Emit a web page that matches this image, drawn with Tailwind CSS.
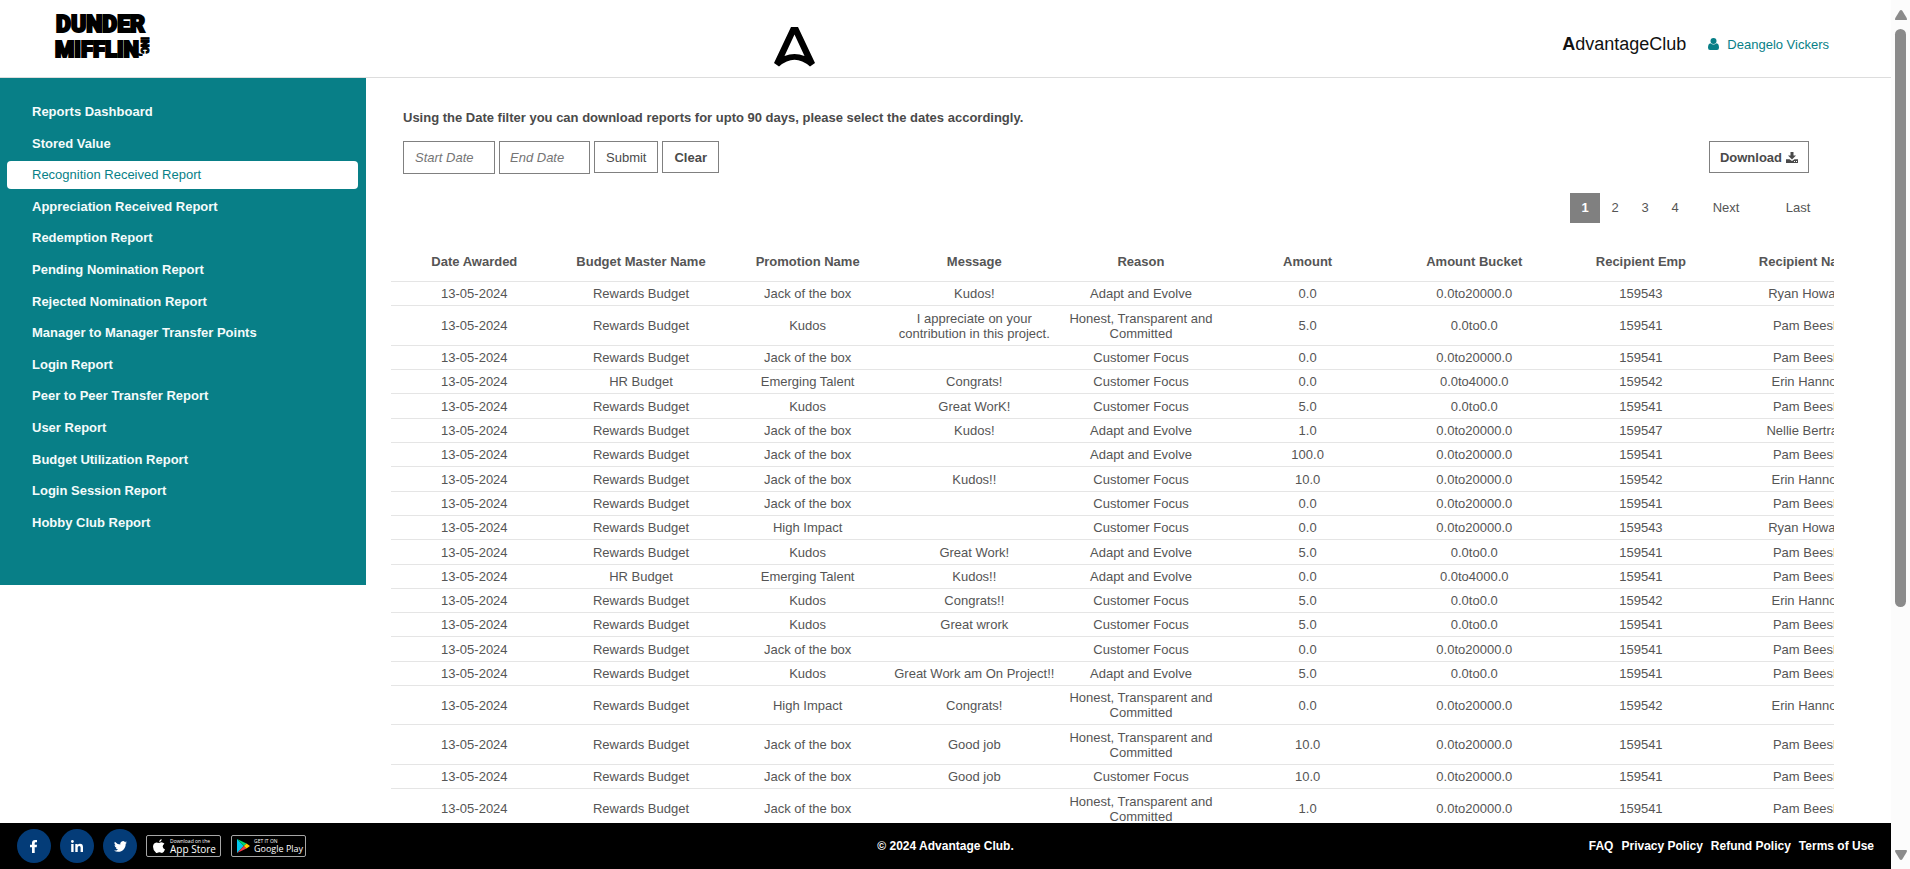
<!DOCTYPE html>
<html lang="en">
<head>
<meta charset="utf-8">
<title>Recognition Received Report</title>
<script src="https://cdn.jsdelivr.net/npm/@tailwindcss/browser@4"></script>
</head>
<body class="h-screen overflow-hidden bg-white font-['Liberation_Sans',Arial,sans-serif] text-[13px] leading-[15px] text-[#555]">
<div class="flex h-full">
  <div class="flex min-w-0 flex-1 flex-col">

    <header class="grid h-[78px] shrink-0 grid-cols-[42.3%_auto_1fr] border-b border-[#ddd] pr-[62px]">
      <a href="#" aria-label="Dunder Mifflin, Inc" class="flex items-start pt-[10px] pl-[54px] font-['Roboto','Liberation_Sans',sans-serif] font-black text-black">
        <svg width="96" height="54" viewBox="0 0 96 54" fill="#000" stroke="#000" aria-hidden="true">
          <text x="2" y="22" font-size="23" stroke-width="2">DUNDER</text>
          <text x="1" y="47" font-size="22" stroke-width="2">MIFFLIN</text>
          <text transform="translate(87 27) rotate(90)" x="0" y="0" font-size="10">INC,</text>
        </svg>
      </a>
      <a href="#" aria-label="Advantage Club home" class="pt-[27px]">
        <svg width="41" height="40" viewBox="0 0 41 40" aria-hidden="true"><path fill="#000" fill-rule="evenodd" d="M17 0H24L41 36L36 39.500Q20.500 26 5 39.500L0 36ZM20.500 7.500L10.500 29Q20.500 25 30.500 29Z"/></svg>
      </a>
      <div class="flex items-center justify-end gap-[22px] pt-[11px]">
        <span class="text-[18px] leading-[20px] text-[#111]"><b>A</b>dvantageClub</span>
        <a href="#" class="flex items-center gap-2 text-[#087f87]">
          <svg width="11" height="12" viewBox="0 0 11 12" fill="currentColor" aria-hidden="true"><circle cx="5.500" cy="3" r="3"/><path d="M2.500 5.200Q5.500 7.800 8.500 5.200Q11 5.500 11 9.800Q11 12 9 12H2Q0 12 0 9.800Q0 5.500 2.500 5.200Z"/></svg>
          Deangelo Vickers
        </a>
      </div>
    </header>

    <div class="flex min-h-0 flex-1 items-start overflow-hidden">
      <nav aria-label="Reports" class="w-[366px] shrink-0 bg-[#087f87] pt-5 pr-2 pb-12 pl-[7px]">
        <ul class="flex h-[439px] flex-col justify-between font-bold text-[#f4fbfb] [&_a]:block [&_a]:h-7 [&_a]:rounded [&_a]:pl-[25px] [&_a]:leading-[28px]">
          <li><a href="#">Reports Dashboard</a></li>
          <li><a href="#">Stored Value</a></li>
          <li><a href="#" aria-current="page" class="bg-white font-normal text-[#087f87]">Recognition Received Report</a></li>
          <li><a href="#">Appreciation Received Report</a></li>
          <li><a href="#">Redemption Report</a></li>
          <li><a href="#">Pending Nomination Report</a></li>
          <li><a href="#">Rejected Nomination Report</a></li>
          <li><a href="#">Manager to Manager Transfer Points</a></li>
          <li><a href="#">Login Report</a></li>
          <li><a href="#">Peer to Peer Transfer Report</a></li>
          <li><a href="#">User Report</a></li>
          <li><a href="#">Budget Utilization Report</a></li>
          <li><a href="#">Login Session Report</a></li>
          <li><a href="#">Hobby Club Report</a></li>
        </ul>
      </nav>

      <main class="min-w-0 flex-1 pt-8 pr-[57px] pl-[25px]">
        <p class="pl-3 font-bold text-[#4a4a4a]">Using the Date filter you can download reports for upto 90 days, please select the dates accordingly.</p>
        <form class="mt-4 flex items-start gap-1 pr-[25px] pl-3 text-[#4a4a4a]">
          <input type="text" aria-label="Start Date" placeholder="Start Date" class="h-[33px] w-[92px] border border-[#808080] pl-[11px] italic placeholder:text-[#757575]">
          <input type="text" aria-label="End Date" placeholder="End Date" class="h-[33px] w-[91px] border border-[#808080] pl-[10px] italic placeholder:text-[#757575]">
          <button type="button" class="h-8 border border-[#808080] px-[11px]">Submit</button>
          <button type="button" class="h-8 border border-[#808080] px-[11px] font-bold">Clear</button>
          <button type="button" class="ml-auto flex h-8 items-center gap-1 border border-[#808080] px-[10px] font-bold">Download
            <svg width="12" height="11" viewBox="0 0 12 11" fill="currentColor" aria-hidden="true"><path d="M4.500 0H7.500V3.500H10L6 7.500L2 3.500H4.500Z"/><path fill-rule="evenodd" d="M0 7.300H3.500L6 9L8.500 7.300H12V11H0ZM8 9V10H9V9ZM10 9V10H11V9Z"/></svg>
          </button>
        </form>
        <nav aria-label="Pages" class="mt-[19px] flex justify-end text-center leading-[30px] text-[#555]">
          <a href="#" aria-current="page" class="w-[30px] bg-[#808080] font-bold text-white">1</a>
          <a href="#" class="w-[30px]">2</a>
          <a href="#" class="w-[30px]">3</a>
          <a href="#" class="w-[30px]">4</a>
          <a href="#" class="w-[72px]">Next</a>
          <a href="#" class="w-[72px]">Last</a>
        </nav>
        <div class="mt-[18px] overflow-hidden">
          <table class="w-[1500px] table-fixed border-separate border-spacing-0 text-center">
            <thead>
              <tr class="h-10 font-bold [&>th]:p-0">
                <th>Date Awarded</th><th>Budget Master Name</th><th>Promotion Name</th><th>Message</th><th>Reason</th><th>Amount</th><th>Amount Bucket</th><th>Recipient Emp</th><th>Recipient Name</th>
              </tr>
            </thead>
            <tbody id="rows" class="[&_td]:border-t [&_td]:border-[#e5e5e5]"></tbody>
          </table>
        </div>
      </main>
    </div>

    <footer class="grid h-[46px] shrink-0 grid-cols-[1fr_auto_1fr] items-center bg-black px-[17px] text-[12px] font-bold text-white">
      <div class="flex items-center gap-[9px]">
        <a href="#" aria-label="Facebook" class="grid size-[34px] place-items-center rounded-full bg-[#043c78]">
          <svg width="8" height="13" viewBox="0 0 8 13" fill="#fff" aria-hidden="true"><path d="M2 13V7.200H0V4.800H2V3Q2 0 5 0H7V2.300H5.700Q4.700 2.300 4.700 3.300V4.800H7L6.700 7.200H4.700V13Z"/></svg>
        </a>
        <a href="#" aria-label="LinkedIn" class="grid size-[34px] place-items-center rounded-full bg-[#043c78]">
          <svg width="12" height="12" viewBox="0 0 12 12" fill="#fff" aria-hidden="true"><circle cx="1.400" cy="1.500" r="1.400"/><path d="M.2 4H2.600V12H.2ZM4.300 4H6.600V5.100Q7.300 3.800 9 3.800Q12 3.800 12 7.200V12H9.600V7.600Q9.600 5.900 8.200 5.900Q6.700 5.900 6.700 7.600V12H4.300Z"/></svg>
        </a>
        <a href="#" aria-label="Twitter" class="grid size-[34px] place-items-center rounded-full bg-[#043c78]">
          <svg width="13" height="11" viewBox="0 0 24 20" fill="#fff" aria-hidden="true"><path d="M24 2.400a10 10 0 0 1-2.800.8A5 5 0 0 0 23.300.5a10 10 0 0 1-3.100 1.200A4.900 4.900 0 0 0 11.800 6.200 14 14 0 0 1 1.700 1a4.900 4.900 0 0 0 1.500 6.600A5 5 0 0 1 1 7a4.900 4.900 0 0 0 3.900 4.900 5 5 0 0 1-2.200.1 4.900 4.900 0 0 0 4.600 3.400A9.900 9.900 0 0 1 0 17.500 14 14 0 0 0 7.500 19.700C16.600 19.700 21.900 12 21.500 5A10 10 0 0 0 24 2.400Z"/></svg>
        </a>
        <div class="flex gap-[10px] font-['Open_Sans','Noto_Sans',sans-serif] font-normal">
          <a href="#" class="flex h-[22px] w-[75px] items-center gap-[5px] rounded-[2px] border border-[#a6a6a6] pl-[6px]">
            <svg width="12" height="14" viewBox="0 0 12 14" fill="#fff" aria-hidden="true" class="shrink-0"><path d="M8.700 0Q8.800 2.700 6.200 3.300Q6 .8 8.700 0ZM6.200 4Q7.800 3.100 9.200 3.400Q10.700 3.700 11.400 4.800Q9.600 5.900 9.700 7.500Q9.800 9.500 12 10.400Q10.600 13.900 9 14Q8.300 14 7.500 13.600Q6.300 13.100 5.200 13.600Q3.900 14.300 3 13.800Q0 11.500 0 7.800Q.2 3.800 3.500 3.400Q4.500 3.400 6.200 4Z"/></svg>
            <span class="flex flex-col whitespace-nowrap"><span class="text-[5px] leading-[6px]">Download on the</span><span class="text-[10px] leading-[10px]">App Store</span></span>
          </a>
          <a href="#" class="flex h-[22px] w-[75px] items-center gap-1 rounded-[2px] border border-[#a6a6a6] pl-[5px]">
            <svg width="13" height="14" viewBox="0 0 13 14" aria-hidden="true" class="shrink-0"><path fill="#00c8f0" d="M0 0V14L6.800 7Z"/><path fill="#00d66f" d="M0 0L9.500 4.600L6.800 7Z"/><path fill="#f03a47" d="M0 14L9.500 9.400L6.800 7Z"/><path fill="#ffcc00" d="M9.500 4.600L13 7L9.500 9.400L6.800 7Z"/></svg>
            <span class="flex flex-col whitespace-nowrap"><span class="text-[5px] leading-[6px]">GET IT ON</span><span class="text-[9px] leading-[10px]">Google Play</span></span>
          </a>
        </div>
      </div>
      <p>© 2024 Advantage Club.</p>
      <div class="flex justify-end gap-2">
        <a href="#">FAQ</a><a href="#">Privacy Policy</a><a href="#">Refund Policy</a><a href="#">Terms of Use</a>
      </div>
    </footer>
  </div>

  <div class="flex w-[19px] shrink-0 flex-col items-center bg-[#fcfcfc] pt-[10px] pb-[9px]" aria-hidden="true">
    <svg width="12" height="10" viewBox="0 0 12 10" fill="#8b8b8b" class="shrink-0"><path d="M6 0Q6.800 0 7.300 .8L11.700 8Q12.500 10 11 10H1Q-.5 10 .3 8L4.700 .8Q5.200 0 6 0Z"/></svg>
    <div class="mt-[9px] h-[68%] w-[11px] rounded-full bg-[#8b8b8b]"></div>
    <svg width="12" height="10" viewBox="0 0 12 10" fill="#8b8b8b" class="mt-auto shrink-0"><path d="M6 10Q6.800 10 7.300 9.200L11.700 2Q12.500 0 11 0H1Q-.5 0 .3 2L4.700 9.200Q5.200 10 6 10Z"/></svg>
  </div>
</div>

<script>
const R = "Rewards Budget", H = "HR Budget";
const J = "Jack of the box", K = "Kudos", E = "Emerging Talent", I = "High Impact";
const A = "Adapt and Evolve", C = "Customer Focus", T = "Honest, Transparent and Committed";
const ryan = ["159543", "Ryan Howard"], pam = ["159541", "Pam Beesly"], erin = ["159542", "Erin Hannon"], nellie = ["159547", "Nellie Bertram"];
const b20 = "0.0to20000.0", b4 = "0.0to4000.0", b0 = "0.0to0.0";
const s = "h-[24px]", m = "h-[25px]", l = "h-[39px]", x = "h-[40px]";
const rows = [
  [s, R, J, "Kudos!", A, "0.0", b20, ryan],
  [x, R, K, "I appreciate on your contribution in this project.", T, "5.0", b0, pam],
  [s, R, J, "", C, "0.0", b20, pam],
  [s, H, E, "Congrats!", C, "0.0", b4, erin],
  [m, R, K, "Great WorK!", C, "5.0", b0, pam],
  [s, R, J, "Kudos!", A, "1.0", b20, nellie],
  [s, R, J, "", A, "100.0", b20, pam],
  [m, R, J, "Kudos!!", C, "10.0", b20, erin],
  [s, R, J, "", C, "0.0", b20, pam],
  [s, R, I, "", C, "0.0", b20, ryan],
  [m, R, K, "Great Work!", A, "5.0", b0, pam],
  [s, H, E, "Kudos!!", A, "0.0", b4, pam],
  [s, R, K, "Congrats!!", C, "5.0", b0, erin],
  [s, R, K, "Great wrork", C, "5.0", b0, pam],
  [m, R, J, "", C, "0.0", b20, pam],
  [s, R, K, "Great Work am On Project!!", A, "5.0", b0, pam],
  [l, R, I, "Congrats!", T, "0.0", b20, erin],
  [x, R, J, "Good job", T, "10.0", b20, pam],
  [s, R, J, "Good job", C, "10.0", b20, pam],
  [x, R, J, "", T, "1.0", b20, pam]
];
document.getElementById("rows").innerHTML = rows.map(([h, ...cells]) =>
  `<tr class="${h}">${["13-05-2024", ...cells.flat()].map(c => `<td class="p-0">${c}</td>`).join("")}</tr>`).join("");
</script>
</body>
</html>
